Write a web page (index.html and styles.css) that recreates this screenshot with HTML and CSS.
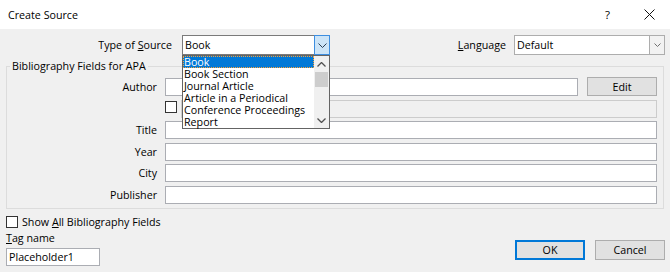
FILE: index.html
```html
<!DOCTYPE html>
<html>
<head>
<meta charset="utf-8">
<title>Create Source</title>
<link rel="stylesheet" href="styles.css">
</head>
<body>
<div class="window">
  <div class="titlebar">
    <span class="title">Create Source</span>
    <div class="tb-controls">
      <span class="tb-help">?</span>
      <svg class="tb-close" width="11" height="11" viewBox="0 0 11 11"><path d="M0.5 0.5L10.5 10.5M10.5 0.5L0.5 10.5" stroke="#111" stroke-width="1" fill="none"/></svg>
    </div>
  </div>
  <div class="content">
    <div class="top-row">
      <span class="type-label">Type of <u>S</u>ource</span>
      <div class="combo combo-type">
        <span class="combo-text">Book</span>
        <span class="combo-btn"><svg width="9" height="5" viewBox="0 0 9 5"><path d="M0.5 0.5L4.5 4.5L8.5 0.5" fill="none" stroke="#2b3f55" stroke-width="1"/></svg></span>
        <div class="droplist">
          <div class="items">
            <div class="item selected">Book</div>
            <div class="item">Book Section</div>
            <div class="item">Journal Article</div>
            <div class="item">Article in a Periodical</div>
            <div class="item">Conference Proceedings</div>
            <div class="item">Report</div>
          </div>
          <div class="scrollbar">
            <div class="sb-arrow"><svg width="9" height="5" viewBox="0 0 9 5"><path d="M0.5 4.5L4.5 0.5L8.5 4.5" fill="none" stroke="#505050" stroke-width="1.3"/></svg></div>
            <div class="sb-thumb"></div>
            <div class="sb-track"></div>
            <div class="sb-arrow"><svg width="9" height="5" viewBox="0 0 9 5"><path d="M0.5 0.5L4.5 4.5L8.5 0.5" fill="none" stroke="#505050" stroke-width="1.3"/></svg></div>
          </div>
        </div>
      </div>
      <div class="spacer"></div>
      <span class="lang-label"><u>L</u>anguage</span>
      <div class="combo combo-lang">
        <span class="combo-text">Default</span>
        <span class="combo-btn"><svg width="7" height="4" viewBox="0 0 7 4"><path d="M0.5 0.5L3.5 3.5L6.5 0.5" fill="none" stroke="#707070" stroke-width="1"/></svg></span>
      </div>
    </div>

    <fieldset class="group">
      <legend>Bibliography Fields for APA</legend>
      <div class="rows">
        <div class="row">
          <span class="lbl">Author</span>
          <div class="input"></div>
          <button class="btn edit-btn">Edit</button>
        </div>
        <div class="row">
          <span class="lbl"></span>
          <span class="check check-corp"></span>
          <div class="input disabled"></div>
        </div>
        <div class="row">
          <span class="lbl">Title</span>
          <div class="input"></div>
        </div>
        <div class="row">
          <span class="lbl">Year</span>
          <div class="input"></div>
        </div>
        <div class="row">
          <span class="lbl">City</span>
          <div class="input"></div>
        </div>
        <div class="row">
          <span class="lbl">Publisher</span>
          <div class="input"></div>
        </div>
      </div>
    </fieldset>

    <div class="bottom">
      <div class="bottom-left">
        <div class="show-all"><span class="check"></span><span>Show <u>A</u>ll Bibliography Fields</span></div>
        <div class="tag-label"><u>T</u>ag name</div>
        <div class="input tag-input">Placeholder1</div>
      </div>
      <div class="buttons">
        <button class="btn ok-btn">OK</button>
        <button class="btn cancel-btn">Cancel</button>
      </div>
    </div>
  </div>
</div>
</body>
</html>
```

FILE: styles.css
```css
* { box-sizing: border-box; }
html, body { margin: 0; padding: 0; }
body {
  width: 670px;
  height: 272px;
  overflow: hidden;
  background: #f0f0f0;
  font-family: "Segoe UI", "Open Sans", "Noto Sans", sans-serif;
  font-size: 10.7px;
  color: #000;
}
u { text-decoration-thickness: 1px; text-underline-offset: 1px; }

.titlebar {
  height: 29px;
  background: #fff;
  display: flex;
  align-items: center;
  padding-left: 8px;
  padding-right: 15px;
  font-size: 10.7px;
}
.title { flex: 1; }
.tb-controls { display: flex; align-items: center; }
.tb-help { font-size: 11.5px; margin-right: 34px; }
.tb-close { display: block; }

.content { padding: 6px 5px 0 6px; }

.top-row { display: flex; align-items: center; height: 20px; }
.type-label { width: 166px; text-align: right; margin-right: 10px; }
.spacer { flex: 1; }
.lang-label { margin-right: 8px; }

.combo {
  position: relative;
  height: 20px;
  background: #fff;
  border: 1px solid #7a7a7a;
  display: flex;
  align-items: center;
}
.combo-type { width: 148px; }
.combo-lang { width: 151px; border-color: #adadad; }
.combo-text { padding-left: 2px; flex: 1; line-height: 18px; }
.combo-btn {
  width: 16px;
  height: 20px;
  margin: -1px -1px -1px 0;
  display: flex;
  align-items: center;
  justify-content: center;
}
.combo-type .combo-btn { background: #cce4f7; border: 1px solid #3d8ee0; }
.combo-lang .combo-btn { background: #f2f2f2; border: 1px solid #adadad; }

.droplist {
  position: absolute;
  left: -1px;
  top: 19px;
  width: 148px;
  height: 74px;
  background: #fff;
  border: 1px solid #646464;
  display: flex;
  z-index: 5;
}
.items { flex: 1; }
.item {
  height: 12px;
  line-height: 12px;
  padding-left: 1px;
  white-space: nowrap;
}
.item.selected {
  background: #0078d7;
  color: #fff;
  outline: 1px dotted #f7a23b;
  outline-offset: -1px;
}
.scrollbar {
  width: 15px;
  background: #f0f0f0;
  display: flex;
  flex-direction: column;
}
.sb-arrow { height: 16px; display: flex; align-items: center; justify-content: center; }
.sb-thumb { height: 15px; background: #cdcdcd; margin: 0 1px; }
.sb-track { flex: 1; }

.group {
  margin: 4px 1px 0 0;
  padding: 4px 6px 4px 3px;
  border: 1px solid #dcdcdc;
  min-width: 0;
}
.group legend { padding: 0 2px; line-height: 14px; }
.rows { display: flex; flex-direction: column; gap: 3.6px; }
.row { display: flex; align-items: flex-end; }
.lbl { width: 147px; margin-right: 8px; text-align: right; align-self: center; }
.input {
  flex: 1;
  height: 18px;
  background: #fff;
  border: 1px solid #abadb3;
}
.input.disabled { background: #f0f0f0; border-color: #cccccc; }

.check {
  width: 12px;
  height: 12px;
  border: 1px solid #333;
  background: #fff;
  flex: none;
}
.check-corp { align-self: flex-start; margin-top: 1px; margin-right: 4px; }

.btn {
  font-family: inherit;
  font-size: inherit;
  color: #000;
  background: #e1e1e1;
  border: 1px solid #adadad;
  padding: 0;
  width: 70px;
  height: 20px;
}
.edit-btn { height: 19px; margin-left: 9px; }
.ok-btn { border: 2px solid #0078d7; }

.bottom { display: flex; margin-top: 6px; }
.bottom-left { flex: 1; }
.show-all { display: flex; align-items: center; height: 15px; }
.show-all .check { margin-right: 4px; }
.tag-label { margin-top: 1px; line-height: 15px; }
.tag-input {
  flex: none;
  width: 94px;
  margin-top: 2px;
  padding-left: 2px;
  line-height: 16px;
}
.buttons { display: flex; gap: 10px; margin-top: 25px; }
```
